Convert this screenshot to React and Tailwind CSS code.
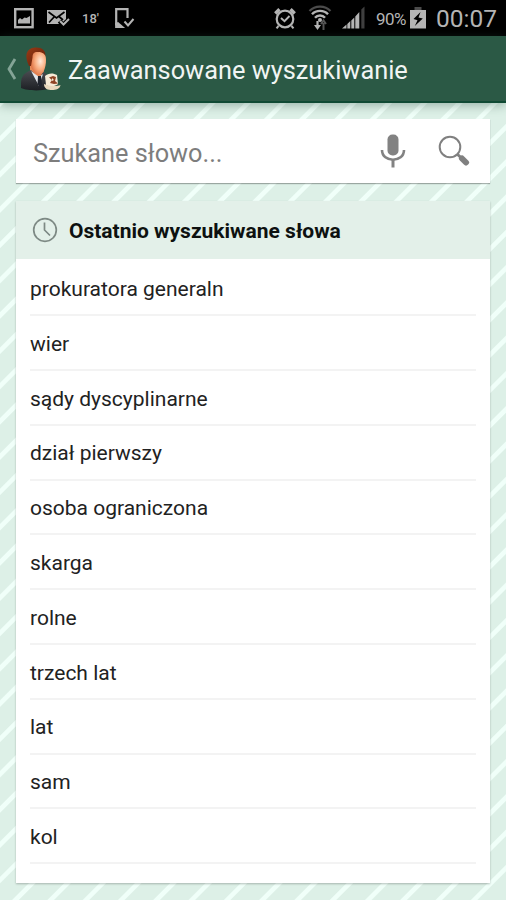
import React, { useState } from 'react';

const recentWords = [
    'prokuratora generaln',
    'wier',
    'sądy dyscyplinarne',
    'dział pierwszy',
    'osoba ograniczona',
    'skarga',
    'rolne',
    'trzech lat',
    'lat',
    'sam',
    'kol',
];

function StatusBar() {
    return (
        <div className="h-9 shrink-0 bg-black text-[#b4b4b4] flex items-center pl-3.5 pr-[9px]">
            {/* Notifications */}
            <svg className="w-5 h-[22px]" viewBox="0 0 20 22" fill="none" stroke="currentColor">
                <rect x="1.2" y="2.2" width="17.4" height="18" strokeWidth="2.4" />
                <path d="M4 16.5V13l2-2 2 1.500 2.500-2 2 .5L16 9v7.500z" fill="currentColor" stroke="none" />
            </svg>
            <svg className="ml-3 w-6 h-5" viewBox="0 0 24 20" fill="none" stroke="currentColor">
                <path d="M1 2h19v14H1z" fill="currentColor" stroke="none" />
                <path d="M2.5 4l8 6 8-6M3 14.5l5.5-6M17 12l-4-3.500" stroke="#000" strokeWidth="1.7" />
                <path d="M13.500 13l3.500 4 6.500-6" stroke="#000" strokeWidth="4.500" />
                <path d="M14 13l3.500 3.500L23 11" strokeWidth="2" />
            </svg>
            <span className="ml-3 w-[21px] text-[13px] leading-none font-medium">18'</span>
            <svg className="ml-2.5 w-[22px] h-[22px]" viewBox="0 0 22 22" fill="none" stroke="currentColor">
                <path d="M14.500 11V2.200H3.200v16" strokeWidth="2.200" />
                <path d="M2.100 21v-5l3-1 7 6z" fill="currentColor" stroke="none" />
                <path d="M11.500 14.500l3.500 4 5.500-6.500" strokeWidth="2" />
            </svg>

            <div className="flex-1" />

            {/* System icons */}
            <svg className="w-[24px] h-6" viewBox="0 0 24 24" fill="none" stroke="currentColor">
                <circle cx="12" cy="13" r="8.300" strokeWidth="2.200" />
                <path d="M2.300 7.500l4.200-4.200M21.700 7.500l-4.200-4.200" strokeWidth="3.400" />
                <path d="M5.500 20l-2 2.300M18.500 20l2 2.300" strokeWidth="2" />
                <path d="M8 12l3.500 3.200L16.500 10" strokeWidth="1.900" />
            </svg>
            <svg className="ml-[11px] w-6 h-[26px]" viewBox="0 0 24 26" fill="none" stroke="currentColor">
                <path d="M1.500 6C7 .2 17 .2 22.500 6" stroke="#4b4b4b" strokeWidth="2.200" />
                <path d="M4 9.200c4-4.500 12-4.500 16 0" strokeWidth="2.400" />
                <path d="M7 12.700c2.500-3 7.500-3 10 0" strokeWidth="2.400" />
                <circle cx="12" cy="15" r="2" fill="currentColor" stroke="none" />
                <path d="M9.500 16v6" strokeWidth="2.200" />
                <path d="M6 20h7l-3.500 5z" fill="currentColor" stroke="none" />
                <path d="M15.500 25v-7M13 19l2.500-3.500L18 19" stroke="#555" strokeWidth="2" />
            </svg>
            <svg className="ml-2.5 w-6 h-[24px]" viewBox="0 0 24 24" fill="currentColor">
                <path d="M0 22.500l4.500-4v4zM5.300 18l3-3v7.500h-3zM9.300 14.500l3-3v11h-3zM13.300 10.500l4-4.500v16.500h-4z" />
                <path d="M19.300 3.500l3.200-3v22h-3.200z" fill="#3f3f3f" />
            </svg>
            <span className="ml-2.5 w-[34px] pt-0.5 text-[17px] leading-none tracking-[-0.5px] whitespace-nowrap">90%</span>
            <svg className="w-4 h-[24px]" viewBox="0 0 16 24">
                <path d="M4.500 1h7v3h-7z" fill="#4b4b4b" />
                <path d="M0 4h16v18.500H0z" fill="currentColor" />
                <path d="M10.500 6L3.500 13l4 1.200-2.700 5.800 8-7.500-4.300-1z" fill="#000" />
            </svg>
            <span className="ml-2.5 w-[61px] pt-0.5 text-[24.5px] leading-none whitespace-nowrap">00:07</span>
        </div>
    );
}

function LawyerIcon() {
    return (
        <svg className="w-[42px] h-11 shrink-0" viewBox="0 0 42 44">
            <defs>
                <radialGradient id="face" cx="0.65" cy="0.45" r="0.65">
                    <stop offset="0" stopColor="#ffe9d8" />
                    <stop offset="0.5" stopColor="#f9ad80" />
                    <stop offset="1" stopColor="#d9683a" />
                </radialGradient>
                <linearGradient id="hair" x1="0" y1="0" x2="1" y2="1">
                    <stop offset="0" stopColor="#9a3b16" />
                    <stop offset="1" stopColor="#5c1c08" />
                </linearGradient>
                <linearGradient id="suit" x1="0" y1="0" x2="0" y2="1">
                    <stop offset="0" stopColor="#4b4d52" />
                    <stop offset="1" stopColor="#1d1f24" />
                </linearGradient>
            </defs>
            <path d="M9 19h13l1 8-5 7-9-8z" fill="#e58958" />
            <path d="M0 41c-.5-10 1-14 10-18l8 9 4-7c4 1 5 4 5 10v7c-6 2-21 2-27-1z" fill="url(#suit)" />
            <path d="M10 24l8 15 4-12-4 3z" fill="#e4e7ec" />
            <path d="M17 29h3l1 9-1.500 3-3-4z" fill="#20242d" />
            <path d="M9 13c0-7 3-10 8-10s8 4 8 10c0 8-3 15-7 15S9 21 9 13z" fill="url(#face)" />
            <path d="M8 19C3 9 5 1 14 .500c7-.5 10.500 2.500 10.500 8.500-2-3.500-4-3.500-7-4-4-.5-6 1-6 5.500L10 19z" fill="url(#hair)" />
            <path d="M24 29c3-3 8-3.500 12-1l1 9c-3 3-10 3-12 1z" fill="#f7ead6" />
            <path d="M23 37c4 2 12 3 16.500 1-.5 4-4.500 5-8.500 5s-8-1-8-6z" fill="#ead9be" />
            <path d="M28 30.500l4-1.500 3 1-1 4 3 2.500-4 .5-4-1 2-3z" fill="#8f4425" />
            <path d="M31 31l2 2-2 1z" fill="#f7ead6" />
        </svg>
    );
}

function TitleBar() {
    return (
        <header className="relative h-[67px] shrink-0 bg-[#2b5945] border-b-2 border-[#104a34] shadow-[0_2px_10px_rgba(40,80,65,0.4)] flex items-center pl-1.5">
            <svg className="w-[11px] h-[22px]" viewBox="0 0 11 22" fill="none" stroke="#84a496" strokeWidth="2.800">
                <path d="M9 1L3 11l6 10" />
            </svg>
            <div className="ml-1">
                <LawyerIcon />
            </div>
            <h1 className="ml-[5px] pt-[5px] text-[25.35px] leading-none text-[#f1f5f3] whitespace-nowrap">Zaawansowane wyszukiwanie</h1>
        </header>
    );
}

function SearchBox() {
    const [query, setQuery] = useState('');

    return (
        <div className="h-16 shrink-0 bg-white shadow-[0_1px_1px_rgba(0,0,0,0.3)] flex items-center pl-[17px] pr-5">
            <input
                value={query}
                onChange={(e) => setQuery(e.target.value)}
                placeholder="Szukane słowo..."
                className="flex-1 min-w-0 pt-1.5 text-[25.3px] leading-8 text-[#222] placeholder:text-[#7d7d7d] outline-none"
            />
            <button className="w-[26px] h-9">
                <svg viewBox="0 0 26 36" fill="none" stroke="#828282">
                    <rect x="7.500" y="1.500" width="11" height="21" rx="5" fill="#828282" stroke="none" />
                    <path d="M2 17c0 13 22 13 22 0" strokeWidth="2.600" />
                    <path d="M13 27v7.500" strokeWidth="3" />
                </svg>
            </button>
            <button className="ml-8 w-8 h-8">
                <svg viewBox="0 0 32 32" fill="none" stroke="#808080">
                    <circle cx="12" cy="12" r="10.300" strokeWidth="2" />
                    <path d="M19 19l5 4.500" strokeWidth="3" />
                    <path d="M24 23.500l4 4" strokeWidth="6" strokeLinecap="round" />
                </svg>
            </button>
        </div>
    );
}

function RecentWords() {
    return (
        <section className="mt-[18px] h-[682px] shrink-0 bg-white shadow-[0_1px_2px_rgba(0,0,0,0.25)]">
            <div className="h-[58px] bg-[#e3f0e9] flex items-center pl-4">
                <svg className="w-[26px] h-[26px]" viewBox="0 0 26 26" fill="none" stroke="#7d8984" strokeWidth="1.700">
                    <circle cx="13" cy="13" r="11.300" />
                    <path d="M12.500 5.500V13l5.500 5.500" />
                </svg>
                <h2 className="ml-[11px] pt-0.5 text-[21px] leading-none font-bold text-[#0d1110] whitespace-nowrap">Ostatnio wyszukiwane słowa</h2>
            </div>
            <ul className="px-3.5 pt-[2.4px]">
                {recentWords.map((word) => (
                    <li key={word} className="h-[54.8px] pt-1 border-b-2 border-[#f3f3f3] flex items-center text-[21px] text-[#222]">
                        {word}
                    </li>
                ))}
            </ul>
        </section>
    );
}

export default function App() {
    return (
        <div className="h-[900px] w-full overflow-hidden flex flex-col font-['Roboto',sans-serif] bg-[repeating-linear-gradient(135deg,#f0fff9_0px,#f0fff9_0.4px,#ddf0e7_1.4px,#ddf0e7_20.7px,#f0fff9_21.7px,#f0fff9_24.95px)]">
            <StatusBar />
            <TitleBar />
            <main className="flex-1 flex flex-col px-4 pt-4">
                <SearchBox />
                <RecentWords />
            </main>
        </div>
    );
}
